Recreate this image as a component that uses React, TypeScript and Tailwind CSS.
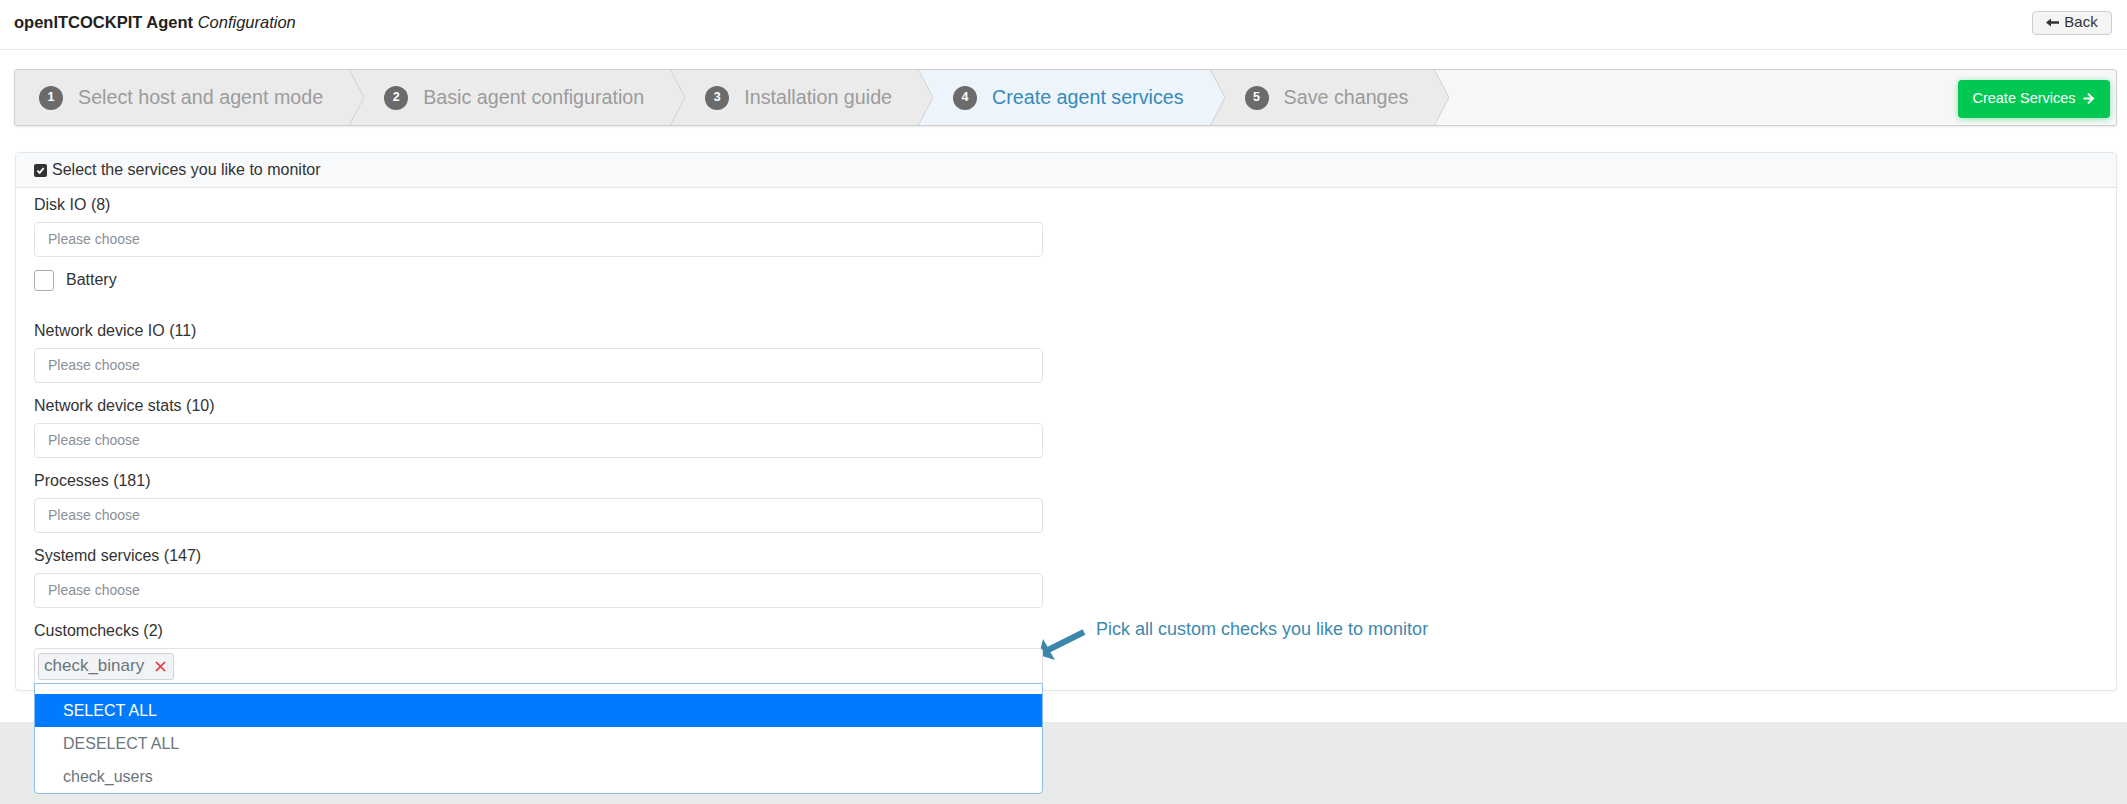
import React from "react";
import { ArrowRight } from "lucide-react";

const steps = [
  { n: 1, label: "Select host and agent mode" },
  { n: 2, label: "Basic agent configuration" },
  { n: 3, label: "Installation guide" },
  { n: 4, label: "Create agent services", active: true },
  { n: 5, label: "Save changes" },
];

function Step({ n, label, active, first }: { n: number; label: string; active?: boolean; first?: boolean }) {
  const fill = active ? "#eef4fb" : "#ebebeb";
  return (
    <div
      className={`relative flex h-full items-center pr-[26px] ${active ? "bg-[#eef4fb]" : "bg-[#ebebeb]"} ${
        first ? "pl-[24px]" : "pl-[35px]"
      }`}
    >
      <span className="flex h-[24px] w-[24px] items-center justify-center rounded-full bg-[#6b6b6b] text-[12.5px] font-bold text-white">
        {n}
      </span>
      <span className={`ml-[15px] whitespace-nowrap text-[19.7px] ${active ? "text-[#348ab8]" : "text-[#9b9b9b]"}`}>
        {label}
      </span>
      <svg
        className="absolute right-[-15px] top-0 z-10 h-full w-[15px]"
        viewBox="0 0 15 55"
        preserveAspectRatio="none"
      >
        <polygon points="0,0 15,27.5 0,55" fill={fill} />
        <polyline points="0.5,0 15,27.5 0.5,55" fill="none" stroke="#d2d2d2" strokeWidth="1" />
      </svg>
    </div>
  );
}

function Field({ label, className }: { label: string; className?: string }) {
  return (
    <div className={className}>
      <div className="mb-[5px] h-[24px] text-[16px] leading-[24px] text-[#333]">{label}</div>
      <div className="flex h-[35px] w-[1009px] items-center rounded-[4px] border border-[#dfe3e7] bg-white pl-[13px] text-[14px] text-[#8a9097]">
        Please choose
      </div>
    </div>
  );
}

export default function App() {
  return (
    <div className="min-h-[804px] bg-[#e9eaea] font-['Liberation_Sans',Arial,Helvetica,sans-serif] text-[#333]">
      <div className="bg-white pb-[31px]">
        {/* header */}
        <div className="flex h-[50px] items-center justify-between border-b border-[#ececec] pl-[14px] pr-[15px] pb-[4px]">
          <div className="text-[16.5px] text-[#222]">
            <span className="font-bold">openITCOCKPIT Agent</span> <span className="italic">Configuration</span>
          </div>
          <button className="flex h-[24px] w-[80px] items-center justify-center gap-[5px] rounded-[4px] border border-[#cfcfcf] bg-[#f4f4f4] text-[15px] text-[#333]">
            <svg width="13" height="9" viewBox="0 0 13 9">
              <polygon points="0,4.5 5,0.5 5,3.3 13,3.3 13,5.7 5,5.7 5,8.5" fill="#333" />
            </svg>
            <span>Back</span>
          </button>
        </div>

        <div className="pl-[14px] pr-[10px] pt-[19px]">
          {/* wizard */}
          <div className="flex h-[57px] items-stretch overflow-hidden rounded-[3px] border border-[#d0d0d0] bg-[#f7f7f7] shadow-[0_1px_2px_rgba(0,0,0,0.1)]">
            {steps.map((s, i) => (
              <Step key={s.n} n={s.n} label={s.label} active={s.active} first={i === 0} />
            ))}
            <div className="flex flex-1 items-center justify-end pr-[6px] pt-[2px]">
              <button className="flex h-[38px] w-[152px] items-center justify-center gap-[5px] rounded-[4px] bg-[#00c853] text-[14.5px] text-white shadow-[0_1px_6px_rgba(0,200,83,0.45)]">
                <span>Create Services</span>
                <ArrowRight size={15} strokeWidth={3.2} />
              </button>
            </div>
          </div>

          {/* panel */}
          <div className="ml-[1px] mt-[26px] rounded-[4px] border border-[#e4e7eb] bg-white shadow-[0_1px_3px_rgba(0,0,0,0.04)]">
            <div className="flex h-[35px] items-center gap-[5px] border-b border-[#e4e7eb] bg-[#f8f9fa] pl-[18px] text-[16px] text-[#333]">
              <span className="flex h-[13px] w-[13px] items-center justify-center rounded-[2px] bg-[#333]">
                <svg width="9" height="9" viewBox="0 0 10 10">
                  <polyline points="1.5,5.2 4,7.6 8.5,2.4" fill="none" stroke="#fff" strokeWidth="2" />
                </svg>
              </span>
              <span>Select the services you like to monitor</span>
            </div>

            <div className="pb-[7px] pl-[18px] pt-[5px]">
              <Field label="Disk IO (8)" />
              <div className="mb-[28px] mt-[12px] flex h-[22px] items-center">
                <span className="h-[21px] w-[20px] rounded-[3px] border-[1.5px] border-[#a7afb7] bg-white" />
                <span className="ml-[12px] text-[16px] text-[#333]">Battery</span>
              </div>
              <Field label="Network device IO (11)" className="mb-[11px]" />
              <Field label="Network device stats (10)" className="mb-[11px]" />
              <Field label="Processes (181)" className="mb-[11px]" />
              <Field label="Systemd services (147)" className="mb-[11px]" />

              <div className="flex items-start">
                <div className="w-[1009px]">
                  <div className="mb-[5px] h-[24px] text-[16px] leading-[24px] text-[#333]">Customchecks (2)</div>
                  <div className="relative">
                    <div className="flex h-[35px] items-center rounded-t-[4px] border border-b-0 border-[#dfe3e7] bg-white pl-[3px]">
                      <span className="flex h-[27px] items-center rounded-[3px] border border-[#ced4da] bg-[#f1f3f5] pl-[5px] pr-[7px] text-[17px] text-[#6c757d]">
                        check_binary
                        <svg className="ml-[11px]" width="11" height="11" viewBox="0 0 11 11">
                          <path d="M1 1 L10 10 M10 1 L1 10" stroke="#e0333f" strokeWidth="1.7" />
                        </svg>
                      </span>
                    </div>
                    <div className="absolute left-0 top-full z-20 w-full rounded-b-[4px] border border-[#8bbcee] bg-white pt-[10px]">
                      <div className="flex h-[33px] items-center bg-[#007bff] pl-[28px] text-[16px] text-white">SELECT ALL</div>
                      <div className="flex h-[33px] items-center pl-[28px] text-[16px] text-[#6c757d]">DESELECT ALL</div>
                      <div className="flex h-[33px] items-center pl-[28px] text-[16px] text-[#6c757d]">check_users</div>
                    </div>
                  </div>
                </div>
                <div className="flex items-start">
                  <svg className="ml-[-6px] mt-[6px]" width="49" height="37" viewBox="0 0 49 37">
                    <polygon
                      points="45.6,4.3 48.4,9.7 13.4,27.2 18,35 2,30 6,14 10.6,21.8"
                      fill="#3a86ad"
                    />
                  </svg>
                  <span className="ml-[10px] mt-[-2px] text-[18px] leading-[24px] text-[#3d88b0]">
                    Pick all custom checks you like to monitor
                  </span>
                </div>
              </div>
            </div>
          </div>
        </div>
      </div>
    </div>
  );
}
